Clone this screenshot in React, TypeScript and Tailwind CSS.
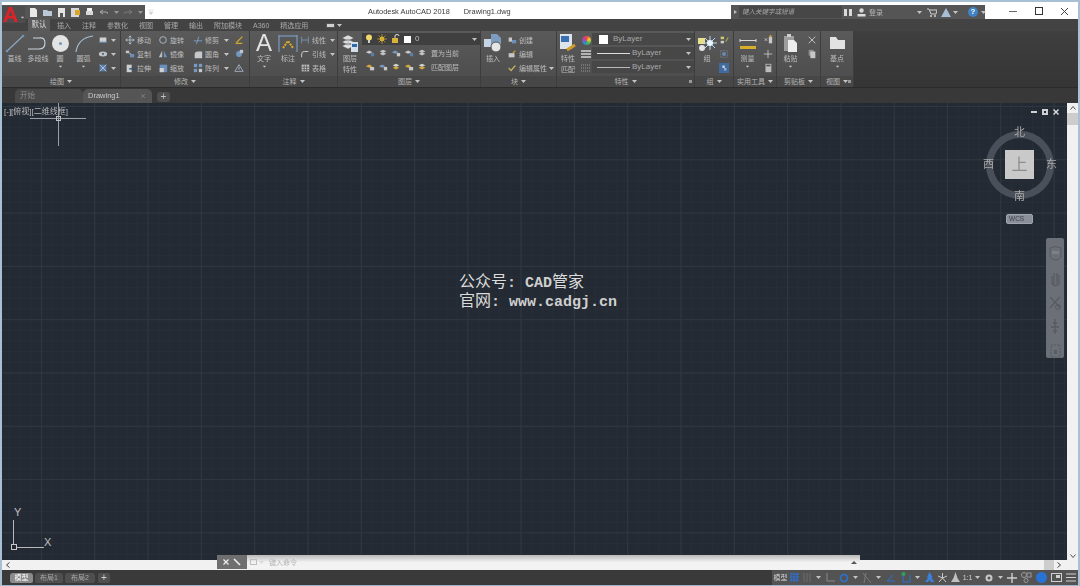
import React from 'react';

const Caret = ({ className = '' }: { className?: string }) => (
  <svg width="5" height="3" viewBox="0 0 5 3" className={`block shrink-0 ${className}`}>
    <polygon points="0,0 5,0 2.5,3" fill="#c4c4c4" />
  </svg>
);

const Ico = ({ w = 12, h = 12, children }: { w?: number; h?: number; children: React.ReactNode }) => (
  <svg width={w} height={h} viewBox={`0 0 ${w} ${h}`} fill="none" className="block shrink-0">
    {children}
  </svg>
);

/* ---------- small ribbon icons ---------- */
const icons: Record<string, React.ReactNode> = {
  rect: <><rect x="2" y="3" width="8" height="6" fill="#e8e8e8" /><rect x="2" y="8" width="8" height="1.5" fill="#5f8fc0" /></>,
  ellipse: <><ellipse cx="6" cy="6" rx="5" ry="3" fill="#d8d8d8" /><circle cx="6" cy="6" r="1.4" fill="#4f7fb5" /></>,
  hatch: <><rect x="2" y="2" width="8" height="8" fill="#5b86c4" /><path d="M2 2l8 8M10 2l-8 8" stroke="#d5dfea" /></>,
  move: <path d="M6 1v10M1 6h10M6 1L4.500 3M6 1l1.500 2M6 11L4.500 9M6 11l1.500-2M1 6l2-1.500M1 6l2 1.500M11 6L9 4.500M11 6L9 7.500" stroke="#c9d6e4" />,
  copy: <><rect x="1" y="2" width="4" height="3" fill="#dcdcdc" /><rect x="6" y="6" width="5" height="4" fill="#6e9bcf" /><path d="M5 5l2 1" stroke="#eee" /></>,
  stretch: <><rect x="2" y="2" width="6" height="9" fill="#e4e4e4" /><path d="M5 7h6" stroke="#1e4f86" strokeWidth="1.5" /></>,
  rotate: <circle cx="6" cy="6" r="4" stroke="#b7c3cf" strokeWidth="1.2" />,
  mirror: <><polygon points="1,10 5,10 5,2" fill="#d2d2d2" /><polygon points="7,2 7,10 11,10" fill="#6e9bcf" /></>,
  scale: <><rect x="2" y="2" width="9" height="9" fill="#6e9bcf" /><rect x="2" y="6" width="5" height="5" fill="#e6e6e6" /></>,
  trim: <path d="M1 7h10M7 2L4 11" stroke="#7fa6d4" strokeWidth="1.2" />,
  fillet: <path d="M2 11V7q0-4 4-4h5V11z" fill="#dcdcdc" />,
  array: <><rect x="1" y="1" width="4" height="4" fill="#7fa6d4" /><rect x="7" y="1" width="4" height="4" fill="#7fa6d4" /><rect x="1" y="7" width="4" height="4" fill="#7fa6d4" /><rect x="7" y="7" width="4" height="4" fill="#dcdcdc" /></>,
  erase: <path d="M2 10h8M3 9l7-7" stroke="#e2b52f" strokeWidth="1.5" />,
  explode: <><circle cx="6" cy="6" r="3.5" fill="#7aa5d4" /><rect x="7" y="1" width="4" height="4" fill="#cfd8e2" /></>,
  offset: <><polygon points="6,2 11,10 1,10" stroke="#bcd0e6" /><path d="M6 5v3" stroke="#e6e6e6" /></>,
  linear: <path d="M2 2v8M10 2v8M2 6h8" stroke="#7fa6d4" />,
  leader: <path d="M2 10V6q0-3 3-3h5" stroke="#dedede" strokeWidth="1.2" />,
  table: <><rect x="2" y="2" width="9" height="8" fill="#dcdcdc" /><path d="M2 5h9M2 8h9M5 2v8M8 2v8" stroke="#555" /></>,
  layerA: <><path d="M1 5l4-2 4 2-4 2z" fill="#dfdfdf" /><rect x="7" y="6" width="4" height="4" fill="#5e87b8" /></>,
  layerB: <><path d="M2 4l4-2 4 2-4 2zM2 7l4-2 4 2-4 2z" fill="#d8d8d8" /></>,
  layerC: <><path d="M1 5l4-2 4 2-4 2z" fill="#7fa6d4" /><rect x="7" y="6" width="4" height="4" fill="#dcdcdc" /></>,
  layerD: <><path d="M1 5l4-2 4 2-4 2z" fill="#e8b93a" /><rect x="6" y="6" width="5" height="4" fill="#dcdcdc" /></>,
  layerE: <><path d="M2 4l4-2 4 2-4 2z" fill="#e8e8e8" /><path d="M2 7l4-2 4 2-4 2z" fill="#e8b93a" /></>,
  create: <><rect x="2" y="3" width="4" height="5" fill="#dcdcdc" /><rect x="6" y="6" width="5" height="4" fill="#6e9bcf" /></>,
  edit: <><rect x="2" y="5" width="7" height="5" fill="#dcdcdc" /><path d="M7 5l3-3" stroke="#e3b02d" strokeWidth="1.5" /></>,
  attr: <path d="M2 6l3 3 5-6" stroke="#d7c36a" strokeWidth="1.5" />,
  groupA: <><rect x="2" y="2" width="4" height="3" fill="#e8dd7c" /><rect x="2" y="7" width="4" height="3" fill="#e0e0e0" /><path d="M8 8l3-5" stroke="#c9b642" strokeWidth="1.3" /></>,
  groupB: <><rect x="2" y="2" width="8" height="8" stroke="#7b8794" strokeDasharray="2 1" /><rect x="4" y="4" width="4" height="4" fill="#6e9bcf" /></>,
  groupC: <><rect x="0" y="0" width="12" height="12" fill="#3f6fb0" /><rect x="4" y="3" width="3" height="3" fill="#d9e6f4" /><rect x="6" y="6" width="3" height="3" fill="#9dc0e6" /></>,
  id: <><path d="M2 4l3 3M5 4L2 7" stroke="#e0e0e0" /><rect x="7" y="2" width="4" height="8" fill="#dcdcdc" /><rect x="8" y="0" width="2" height="3" fill="#e0b331" /></>,
  plus: <path d="M6 1v10M1 6h10" stroke="#dfdfdf" />,
  calc: <><rect x="3" y="1" width="7" height="10" fill="#cfcfcf" /><rect x="4" y="2" width="5" height="2" fill="#555" /></>,
  cut: <path d="M2 2l8 8M10 2l-8 8" stroke="#cfcfcf" strokeWidth="1.2" />,
  copyclip: <><rect x="2" y="1" width="6" height="7" fill="#9a9a9a" /><rect x="4" y="3" width="6" height="8" fill="#dcdcdc" /></>,
};

const Small = ({ name }: { name: string }) => (
  <svg width="10" height="10" viewBox="0 0 12 12" fill="none" className="block shrink-0 opacity-85">{icons[name]}</svg>
);

const Big = ({ label, label2, w, children, caret }: { label: string; label2?: string; w: number; children: React.ReactNode; caret?: boolean }) => (
  <div className="flex flex-col items-center shrink-0" style={{ width: w }}>
    <div className="h-[20px] flex items-center justify-center">{children}</div>
    <div className="h-[11px] leading-[11px] text-[7px] whitespace-nowrap">{label}</div>
    {label2 && <div className="h-[11px] leading-[11px] text-[7px] whitespace-nowrap">{label2}</div>}
    {caret && <Caret className="mt-[1px] scale-75" />}
  </div>
);

const Row = ({ name, label, caret, w }: { name: string; label?: string; caret?: boolean; w?: number }) => (
  <div className="h-[14px] flex items-center gap-[1px] whitespace-nowrap text-[7px] leading-none" style={w ? { width: w } : undefined}>
    <Small name={name} />
    {label && <span className="ml-[1px]">{label}</span>}
    {caret && <Caret className="ml-auto" />}
  </div>
);

const Panel = ({ title, w, children, corner }: { title: string; w: number; children: React.ReactNode; corner?: boolean }) => (
  <div className="flex flex-col shrink-0 border-r border-[#3d3d3d]" style={{ width: w }}>
    <div className="h-[45px] pt-[2px] flex bg-gradient-to-b from-[#5a5a5a] to-[#4e4e4e]">{children}</div>
    <div className="h-[11px] relative flex items-center justify-center gap-[3px] bg-[#474747] text-[7px] leading-none text-[#b5b5b5]">
      <span>{title}</span>
      <Caret />
      {corner && <span className="absolute right-[2px] top-[4px] w-[3px] h-[3px] bg-[#9a9a9a]" />}
    </div>
  </div>
);

const Combo = ({ children, w, dark }: { children: React.ReactNode; w: number; dark?: boolean }) => (
  <div className={`h-[12px] flex items-center pr-[3px] ${dark ? 'bg-[#3f3f3f]' : 'bg-[#474747]'}`} style={{ width: w }}>
    {children}
    <Caret className="ml-auto" />
  </div>
);

const tabs = ['插入', '注释', '参数化', '视图', '管理', '输出', '附加模块', 'A360', '精选应用'];

const TitleBar = () => (
  <div className="h-[17px] flex bg-white blur-[0.4px]">
    {/* quick access toolbar */}
    <div className="w-[143px] h-[14px] mt-[3px] bg-[#555555] flex items-center pl-[27px] gap-[5px]">
      <Ico w={9} h={9}><path d="M1 0h5l2 2v7H1z" fill="#e8e8e8" /></Ico>
      <Ico w={9} h={9}><path d="M0 2h4l1 1h4v5H0z" fill="#b9c7d6" /></Ico>
      <Ico w={9} h={9}><rect x="1" y="0" width="7" height="9" fill="#e4e4e4" /><rect x="3" y="5" width="3" height="4" fill="#555" /></Ico>
      <Ico w={9} h={9}><rect x="0" y="0" width="8" height="9" fill="#d8d8d8" /><rect x="4" y="2" width="5" height="5" fill="#d9a82b" /></Ico>
      <Ico w={9} h={9}><rect x="1" y="3" width="7" height="4" fill="#d8d8d8" /><rect x="2" y="0" width="5" height="3" fill="#f2f2f2" /></Ico>
      <Ico w={9} h={9}><path d="M1 4h6q2 0 2 2M1 4l3-2M1 4l3 2" stroke="#a9a9a9" /></Ico>
      <Caret className="ml-[1px] opacity-60" />
      <Ico w={9} h={9}><path d="M8 4H2q-2 0-2 2M8 4L5 2M8 4L5 6" stroke="#7b7b7b" /></Ico>
      <Caret className="opacity-60" />
      <Ico w={7} h={7}><path d="M0 1h6M1 3h4l-2 3z" stroke="#d5d5d5" fill="#d5d5d5" strokeWidth=".6" /></Ico>
    </div>
    <div className="ml-[223px] pt-[3px] text-[7.4px] leading-[14px] text-[#3a3a3a] flex gap-[14px] whitespace-nowrap">
      <span>Autodesk AutoCAD 2018</span>
      <span>Drawing1.dwg</span>
    </div>
    {/* search and sign in */}
    <div className="ml-auto w-[254px] h-[14px] mt-[3px] bg-[#555555] flex items-center text-[#b5b5b5] text-[7px] whitespace-nowrap">
      <span className="ml-[3px] w-0 h-0 border-y-[2px] border-l-[3px] border-y-transparent border-l-[#bbbbbb]" />
      <div className="ml-[2px] w-[103px] h-[12px] shrink-0 bg-[#474747] pl-[3px] flex items-center italic text-[6.5px] text-[#a8a8a8] leading-none">键入关键字或短语</div>
      <span className="ml-[1px]"><Ico w={10} h={9}><path d="M1 1h3v7H1zM6 1h3v7H6z" fill="#d8d8d8" /></Ico></span>
      <span className="ml-[4px]"><Ico w={9} h={9}><circle cx="4.500" cy="2.500" r="2.200" fill="#d8d8d8" /><rect x="0.500" y="6" width="8" height="2.500" fill="#dcdcdc" /></Ico></span>
      <span className="ml-[3px] leading-none">登录</span>
      <Caret className="ml-[34px]" />
      <span className="ml-[5px]"><Ico w={10} h={9}><path d="M0 1h2l2 5h5l1-4H3" stroke="#cfcfcf" /><circle cx="4" cy="8" r="1" fill="#cfcfcf" /><circle cx="8" cy="8" r="1" fill="#cfcfcf" /></Ico></span>
      <span className="ml-[4px]"><Ico w={10} h={9}><path d="M5 0l5 9H0z" fill="#a8bdd6" /></Ico></span>
      <Caret className="ml-[2px]" />
      <span className="ml-[10px]"><div className="w-[10px] h-[10px] rounded-full bg-[#3f83c4] text-white text-[8px] leading-[10px] text-center font-bold">?</div></span>
      <Caret className="ml-[3px]" />
    </div>
    <div className="w-[93px] flex items-center justify-between pl-[24px] pr-[9px] pt-[1px] text-[#555555]">
      <span className="w-[8px] h-px bg-[#666666]" />
      <span className="w-[8px] h-[8px] border border-[#333333]" />
      <Ico w={9} h={9}><path d="M1 1l7 7M8 1L1 8" stroke="#444" /></Ico>
    </div>
  </div>
);

const TabRow = () => (
  <div className="h-[12px] bg-[#434343] flex items-center pl-[26px] text-[7px] leading-none text-[#a9a9a9] whitespace-nowrap blur-[0.4px]">
    <div className="h-[12px] w-[22px] flex items-center justify-center bg-[#5a5a5a] text-[#dcdcdc] text-[7.5px]">默认</div>
    <div className="flex ml-[7px] gap-[11px]">
      {tabs.map(t => <span key={t}>{t}</span>)}
    </div>
    <span className="ml-[18px] w-[9px] h-[5px] bg-[#d0d0d0] border border-[#555]" />
    <Caret className="ml-[2px]" />
  </div>
);

const Ribbon = () => (
  <div className="h-[56px] flex bg-gradient-to-b from-[#3f3f3f] to-[#353535] text-[#bdbdbd] blur-[0.4px]">
    <Panel title="绘图" w={119}>
      <Big label="直线" w={25}>
        <Ico w={22} h={20}><path d="M3 18L19 3" stroke="#8fa7bf" strokeWidth="1.2" /><circle cx="3" cy="18" r="1.3" fill="#6e95bf" /><circle cx="19" cy="3" r="1.3" fill="#6e95bf" /></Ico>
      </Big>
      <Big label="多段线" w={22}>
        <Ico w={22} h={20}><path d="M1 16h11q6 0 6-6t-6-5H6" stroke="#c9d4df" strokeWidth="1.1" /></Ico>
      </Big>
      <Big label="圆" w={22} caret>
        <div className="w-[17px] h-[17px] rounded-full bg-[#e3e3e3] flex items-center justify-center"><span className="w-[3px] h-[3px] rounded-full bg-[#6e95bf]" /></div>
      </Big>
      <Big label="圆弧" w={25} caret>
        <Ico w={20} h={20}><path d="M2 19Q4 5 19 3" stroke="#a5bbd0" strokeWidth="1.2" /></Ico>
      </Big>
      <div className="flex flex-col ml-[2px]">
        <Row name="rect" caret w={18} />
        <Row name="ellipse" caret w={18} />
        <Row name="hatch" caret w={18} />
      </div>
    </Panel>
    <Panel title="修改" w={129}>
      <div className="flex flex-col ml-[4px] w-[33px]">
        <Row name="move" label="移动" />
        <Row name="copy" label="复制" />
        <Row name="stretch" label="拉伸" />
      </div>
      <div className="flex flex-col w-[35px]">
        <Row name="rotate" label="旋转" />
        <Row name="mirror" label="镜像" />
        <Row name="scale" label="缩放" />
      </div>
      <div className="flex flex-col w-[41px]">
        <Row name="trim" label="修剪" caret w={36} />
        <Row name="fillet" label="圆角" caret w={36} />
        <Row name="array" label="阵列" caret w={36} />
      </div>
      <div className="flex flex-col">
        <Row name="erase" />
        <Row name="explode" />
        <Row name="offset" />
      </div>
    </Panel>
    <Panel title="注释" w={88}>
      <Big label="文字" w={28} caret>
        <span className="text-[24px] leading-[20px] text-[#e2e2e2] [font-family:'Liberation_Sans',sans-serif]">A</span>
      </Big>
      <Big label="标注" w={20}>
        <Ico w={20} h={19}><path d="M1 1v17M19 1v17M1 2h18" stroke="#7fa6d4" /><path d="M5 14l5-7 5 7" stroke="#d8ab2e" strokeWidth="2" strokeDasharray="2 1" /></Ico>
      </Big>
      <div className="flex flex-col ml-[2px]">
        <Row name="linear" label="线性" caret w={35} />
        <Row name="leader" label="引线" caret w={35} />
        <Row name="table" label="表格" w={35} />
      </div>
    </Panel>
    <Panel title="图层" w={143}>
      <Big label="图层" label2="特性" w={24}>
        <Ico w={18} h={19}><path d="M1 4l6-3 6 3-6 3zM1 8l6-3 6 3-6 3zM1 12l6-3 6 3-6 3z" fill="#e0e0e0" stroke="#555" strokeWidth=".5" /><rect x="10" y="8" width="7" height="10" fill="#d5dfea" /><rect x="11" y="10" width="5" height="3" fill="#2f69ad" /></Ico>
      </Big>
      <div className="flex flex-col">
        <Combo w={118} dark>
          <div className="flex items-center gap-[4px] pl-[3px]">
            <Ico w={8} h={10}><circle cx="4" cy="3.500" r="3" fill="#f0d96a" /><rect x="3" y="6" width="2" height="3" fill="#cfcfcf" /></Ico>
            <Ico w={10} h={10}><circle cx="5" cy="5" r="2.400" fill="#e4bf3e" /><path d="M5 0v10M0 5h10M1.500 1.500l7 7M8.500 1.500l-7 7" stroke="#c9a52c" strokeWidth=".7" /></Ico>
            <Ico w={9} h={10}><rect x="1" y="4" width="6" height="5" fill="#d8b23a" /><path d="M4 4V2q0-1.500 2-1.500T8 2" stroke="#ddd" /></Ico>
            <span className="w-[7px] h-[7px] bg-white" />
            <span className="text-[8px] leading-none">0</span>
          </div>
        </Combo>
        <div className="h-[14px] mt-px flex items-center pl-px text-[7px] leading-none whitespace-nowrap">
          {['layerA', 'layerB', 'layerC', 'layerA', 'layerB'].map((n, i) => <span key={i} className="w-[13px] flex justify-center"><Small name={n} /></span>)}
          <span className="ml-[3px]">置为当前</span>
        </div>
        <div className="h-[14px] flex items-center pl-px text-[7px] leading-none whitespace-nowrap">
          {['layerD', 'layerC', 'layerE', 'layerD', 'layerE'].map((n, i) => <span key={i} className="w-[13px] flex justify-center"><Small name={n} /></span>)}
          <span className="ml-[3px]">匹配图层</span>
        </div>
      </div>
    </Panel>
    <Panel title="块" w={76}>
      <Big label="插入" w={24}>
        <Ico w={20} h={20}><rect x="1" y="6" width="14" height="8" fill="#c5d3e2" /><path d="M8 1h6l4 4v7H8z" fill="#7c9cc0" /><circle cx="13" cy="14" r="5" fill="#e5e5e5" stroke="#555" /></Ico>
      </Big>
      <div className="flex flex-col ml-[2px]">
        <Row name="create" label="创建" />
        <Row name="edit" label="编辑" />
        <Row name="attr" label="编辑属性" caret w={47} />
      </div>
    </Panel>
    <Panel title="特性" w={138} corner>
      <Big label="特性" label2="匹配" w={22}>
        <Ico w={18} h={20}><rect x="1" y="1" width="12" height="15" fill="#dde3ea" /><rect x="2" y="3" width="8" height="6" fill="#3a6fb3" /><path d="M8 17l8-5" stroke="#d39a2a" strokeWidth="3" /></Ico>
      </Big>
      <div className="flex flex-col ml-[1px] w-[12px] items-center">
        <div className="h-[14px] flex items-center"><div className="w-[9px] h-[9px] rounded-full bg-[conic-gradient(#e44,#ec3,#4b5,#38c,#a4b,#e44)]" /></div>
        <div className="h-[14px] flex items-center"><Ico w={10} h={9}><path d="M0 1h10M0 4h10M0 7h10" stroke="#d5d5d5" strokeWidth="1.3" /></Ico></div>
        <div className="h-[14px] flex items-center"><Ico w={10} h={9}><path d="M0 1h10M0 4h10M0 7h10" stroke="#9a9a9a" strokeDasharray="1 1" /></Ico></div>
      </div>
      <div className="flex flex-col gap-[2px] text-[8px] leading-none text-[#a9a9a9] [font-family:'Liberation_Sans',sans-serif]">
        <Combo w={102}><span className="ml-[7px] w-[9px] h-[9px] bg-white" /><span className="ml-[5px]">ByLayer</span></Combo>
        <Combo w={102}><span className="ml-[5px] w-[33px] h-px bg-[#dddddd]" /><span className="ml-[2px]">ByLayer</span></Combo>
        <Combo w={102}><span className="ml-[5px] w-[33px] h-px bg-[#b8b8b8]" /><span className="ml-[2px]">ByLayer</span></Combo>
      </div>
    </Panel>
    <Panel title="组" w={39}>
      <Big label="组" w={24}>
        <Ico w={20} h={19}><rect x="1" y="4" width="7" height="6" fill="#e8e08a" /><circle cx="5" cy="14" r="3" fill="#e4e4e4" /><path d="M13 2v14M6 9h14M8 4l10 10M18 4L8 14" stroke="#b7d8f5" /><circle cx="13" cy="9" r="3" fill="#eaf5ff" /></Ico>
      </Big>
      <div className="flex flex-col">
        <Row name="groupA" />
        <Row name="groupB" />
        <Row name="groupC" />
      </div>
    </Panel>
    <Panel title="实用工具" w={43}>
      <Big label="测量" w={27} caret>
        <Ico w={18} h={16}><path d="M1 4v3M17 4v3M1 5.500h16" stroke="#d8d8d8" /><rect x="1" y="11" width="16" height="3" fill="#d8ad2c" /></Ico>
      </Big>
      <div className="flex flex-col ml-[2px]">
        <Row name="id" />
        <Row name="plus" />
        <Row name="calc" />
      </div>
    </Panel>
    <Panel title="剪贴板" w={44}>
      <Big label="粘贴" w={27} caret>
        <Ico w={15} h={19}><rect x="1" y="2" width="10" height="15" fill="#9e9e9e" /><rect x="4" y="0" width="4" height="3" fill="#cfcfcf" /><path d="M5 6h6l3 3v9H5z" fill="#ececec" /></Ico>
      </Big>
      <div className="flex flex-col ml-[3px]">
        <Row name="cut" />
        <Row name="copyclip" />
      </div>
    </Panel>
    <Panel title="视图" w={33} corner>
      <Big label="基点" w={32} caret>
        <Ico w={15} h={12}><path d="M0 0h6l2 3h7v9H0z" fill="#e2e2e2" /></Ico>
      </Big>
    </Panel>
  </div>
);

const DocTabs = () => (
  <div className="h-[16px] border-t border-[#2b2b2b] bg-[#383838] flex items-end pl-[13px] text-[7.5px] leading-none whitespace-nowrap blur-[0.4px] [font-family:'Liberation_Sans','Noto_Sans_CJK_SC',sans-serif]">
    <div className="w-[68px] h-[14px] rounded-t-[5px] bg-[#4a4a4a] text-[#8c8c8c] flex items-center pl-[5px]">开始</div>
    <div className="w-[69px] h-[14px] rounded-t-[5px] bg-[#555555] text-[#c8c8c8] flex items-center pl-[5px] justify-between pr-[6px]">
      <span>Drawing1</span>
      <Ico w={6} h={6}><path d="M1 1l4 4M5 1L1 5" stroke="#777" /></Ico>
    </div>
    <div className="ml-[5px] mb-[1px] w-[13px] h-[10px] rounded-[3px] bg-[#4f4f4f] text-[#c0c0c0] text-[10px] leading-[10px] text-center">+</div>
  </div>
);

const ViewCube = () => (
  <div className="absolute left-[979px] top-[21px] w-[78px] h-[112px] text-[#a9a9a9] text-[11px] leading-none blur-[0.3px]">
    <div className="absolute left-[5px] top-[7px] w-[68px] h-[68px] rounded-full border-[7px] border-[#4a5059]" />
    <div className="absolute left-[24px] top-[26px] w-[29px] h-[29px] bg-[#c9c9c9] text-[#8d8d8d] text-[16px] flex items-center justify-center">上</div>
    <span className="absolute left-[33px] top-[3px]">北</span>
    <span className="absolute left-[33px] top-[67px]">南</span>
    <span className="absolute left-[2px] top-[35px]">西</span>
    <span className="absolute left-[65px] top-[35px]">东</span>
    <div className="absolute left-[25px] top-[90px] w-[27px] h-[10px] rounded-[2px] bg-[#8b8f9a] border border-[#a0a4ad] text-[#3c4048] text-[6.500px] leading-[8px] pl-[2px] [font-family:'Liberation_Sans',sans-serif]">WCS</div>
  </div>
);

const NavBar = () => (
  <div className="absolute left-[1044px] top-[135px] w-[18px] h-[120px] rounded-[2px] bg-[#6b6f77] flex flex-col items-center pt-[8px] gap-[7px] blur-[0.4px]">
    <Ico w={13} h={17}><path d="M1 2q5-3 11 0v9q-5 6-11 0z" stroke="#575b62" /><rect x="3" y="5" width="7" height="3" fill="#7c8088" /></Ico>
    <Ico w={13} h={17}><path d="M3 14V6M5 14V3M8 14V3M10 14V5M3 14q4 3 7 0" stroke="#575b62" strokeWidth="1.3" /></Ico>
    <Ico w={14} h={17}><path d="M2 3l5 5M12 3L7 8M7 8l-5 6M7 8l5 6" stroke="#575b62" strokeWidth="1.3" /><circle cx="10" cy="13" r="2.500" stroke="#575b62" /></Ico>
    <Ico w={14} h={17}><path d="M7 1v15M3 9h8M5 5h4M5 13h4" stroke="#575b62" strokeWidth="1.3" /></Ico>
    <Ico w={13} h={17}><rect x="2" y="3" width="9" height="12" stroke="#575b62" strokeDasharray="2 1" /><rect x="5" y="8" width="3" height="4" fill="#575b62" /></Ico>
  </div>
);

const Canvas = () => (
  <div className="relative flex-1 overflow-hidden bg-[#232a33] bg-[linear-gradient(#2f3741_1px,transparent_1px),linear-gradient(90deg,#2f3741_1px,transparent_1px),linear-gradient(#272e38_1px,transparent_1px),linear-gradient(90deg,#272e38_1px,transparent_1px)] bg-[size:53.3px_53.3px,53.3px_53.3px,10.66px_10.66px,10.66px_10.66px] bg-[position:0_3px,39px_0,0_3px,39px_0]">
    <div className="absolute left-[2px] top-[4px] text-[8px] leading-[10px] text-[#b9b9b9] whitespace-nowrap blur-[0.3px]">[-][俯视][二维线框]</div>
    {/* crosshair */}
    <div className="absolute left-[28px] top-[15px] w-[56px] h-px bg-[#9a9ea5]" />
    <div className="absolute left-[56px] top-0 w-px h-[43px] bg-[#9a9ea5]" />
    <div className="absolute left-[54px] top-[13px] w-[5px] h-[5px] border border-[#c0c0c0]" />
    {/* viewport controls */}
    <div className="absolute left-[1029px] top-[6px] flex items-center gap-[5px]">
      <span className="w-[6px] h-[2px] bg-[#d0d0d0]" />
      <span className="w-[6px] h-[6px] border-2 border-[#d0d0d0]" />
      <Ico w={6} h={6}><path d="M0.500 0.500l5 5M5.500 0.500l-5 5" stroke="#e0e0e0" strokeWidth="1.4" /></Ico>
    </div>
    <ViewCube />
    <NavBar />
    {/* watermark */}
    <div className="absolute left-[457px] top-[169px] text-[16px] leading-[19px] text-[#dcdcdc] whitespace-nowrap">
      <div className="h-[19px]">公众号<span className="text-[15px] font-bold text-[#cfcfcf] [font-family:'Liberation_Mono',monospace]">: CAD</span>管家</div>
      <div className="h-[19px]">官网<span className="text-[15px] font-bold text-[#cfcfcf] [font-family:'Liberation_Mono',monospace]">: www.cadgj.cn</span></div>
    </div>
    {/* ucs icon */}
    <div className="absolute left-[11px] top-[417px] w-[31px] h-[28px] border-l border-b border-[#b8b8b8]" />
    <div className="absolute left-[9px] top-[441px] w-[6px] h-[6px] border border-[#c8c8c8] bg-[#232a33]" />
    <span className="absolute left-[12px] top-[404px] text-[11px] leading-none text-[#c0c0c0] [font-family:'Liberation_Sans',sans-serif]">Y</span>
    <span className="absolute left-[42px] top-[434px] text-[11px] leading-none text-[#c0c0c0] [font-family:'Liberation_Sans',sans-serif]">X</span>
  </div>
);

const VScroll = () => (
  <div className="w-[11px] bg-[#f1f1f1] flex flex-col items-center">
    <div className="h-[10px] flex items-center"><Ico w={6} h={4}><path d="M0.500 3.500l2.500-3 2.500 3" stroke="#555" /></Ico></div>
    <div className="w-full h-[12px] bg-[#cdcdcd]" />
    <div className="mt-auto h-[8px] flex items-center"><Ico w={6} h={4}><path d="M0.500 0.500l2.500 3 2.500-3" stroke="#555" /></Ico></div>
  </div>
);

const HScroll = () => (
  <div className="h-[10px] relative bg-[#f1f1f1] flex items-center pl-[4px] pr-[17px]">
    <Ico w={4} h={6}><path d="M3.500 0.500l-3 2.500 3 2.500" stroke="#444" /></Ico>
    <div className="ml-auto w-[10px] h-[10px] bg-[#cdcdcd]" />
    <span className="ml-[3px]"><Ico w={4} h={6}><path d="M0.500 0.500l3 2.500-3 2.500" stroke="#444" /></Ico></span>
    {/* floating command line */}
    <div className="absolute left-[215px] bottom-[1px] w-[643px] h-[14px] flex text-[7px] leading-none blur-[0.3px]">
      <div className="w-[30px] bg-[#6f6f6f] flex items-center justify-center gap-[4px]">
        <Ico w={6} h={6}><path d="M0.500 0.500l5 5M5.500 0.500l-5 5" stroke="#eee" strokeWidth="1.2" /></Ico>
        <Ico w={8} h={8}><path d="M1 1l6 6" stroke="#eee" strokeWidth="1.6" /></Ico>
      </div>
      <div className="flex-1 bg-gradient-to-b from-[#b9b9b9] via-[#f1f1f1] to-[#f4f4f4] flex items-center pl-[3px] pr-[3px] text-[#b3b3b3]">
        <span className="w-[7px] h-[6px] border border-[#bdbdbd]" />
        <Caret className="ml-[2px] opacity-50" />
        <span className="ml-[5px]">键入命令</span>
        <span className="ml-auto w-0 h-0 border-x-[3px] border-b-[3px] border-x-transparent border-b-[#555555]" />
      </div>
    </div>
  </div>
);

const LayoutTab = ({ label, w, active }: { label: string; w: number; active?: boolean }) => (
  <div className={`h-[10px] rounded-t-[3px] rounded-b-[2px] flex items-center justify-center ${active ? 'bg-[#8c8c8c] text-white' : 'bg-[#4f4f4f] text-[#a8a8a8]'}`} style={{ width: w }}>{label}</div>
);

/* status bar slots: width plus what is drawn inside */
const slots: { w: number; node: React.ReactNode }[] = [
  { w: 17, node: <span className="text-[7px] text-[#d0d0d0] leading-none">模型</span> },
  { w: 11, node: <Ico w={9} h={9}><path d="M1 0v9M4 0v9M7 0v9M0 1h9M0 4h9M0 7h9" stroke="#2a73d6" /></Ico> },
  { w: 14, node: <Ico w={9} h={9}><path d="M1 0v9M4 0v9M7 0v9" stroke="#6f6f6f" /></Ico> },
  { w: 9, node: <Caret /> },
  { w: 14, node: <Ico w={9} h={9}><path d="M1 0v8h8" stroke="#8a8a8a" /></Ico> },
  { w: 14, node: <Ico w={10} h={10}><circle cx="5" cy="5" r="3.500" stroke="#2a73d6" strokeWidth="1.6" /></Ico> },
  { w: 9, node: <Caret /> },
  { w: 14, node: <Ico w={10} h={10}><path d="M1 0l8 10M4 0l-2 10" stroke="#7a7a7a" /></Ico> },
  { w: 9, node: <Caret /> },
  { w: 15, node: <Ico w={10} h={9}><path d="M1 8h8M1 8l6-6" stroke="#2a73d6" /></Ico> },
  { w: 15, node: <Ico w={10} h={11}><path d="M2 3v7h7V3" stroke="#2a73d6" /><circle cx="2.500" cy="2" r="2" fill="#2fa35a" /></Ico> },
  { w: 9, node: <Caret /> },
  { w: 14, node: <Ico w={11} h={11}><path d="M5.500 0l3 5-1 1 3 4H7L5.500 8 4 10H1l3-4-1-1z" fill="#3d80dc" /></Ico> },
  { w: 13, node: <Ico w={11} h={11}><path d="M5.500 1v5M1 4l4.500 2L10 4M2 10l3.500-4L9 10" stroke="#c8c8c8" /></Ico> },
  { w: 13, node: <Ico w={11} h={11}><path d="M5.500 0l2 6 2.500 4H1l2.500-4z" fill="#c0c0c0" /></Ico> },
  { w: 11, node: <span className="text-[7px] text-[#d0d0d0] leading-none">1:1</span> },
  { w: 9, node: <Caret /> },
  { w: 14, node: <Ico w={10} h={10}><circle cx="5" cy="5" r="3.500" fill="#c8c8c8" /><circle cx="5" cy="5" r="1.500" fill="#555" /></Ico> },
  { w: 9, node: <Caret /> },
  { w: 13, node: <Ico w={10} h={10}><path d="M5 0v10M0 5h10" stroke="#d0d0d0" strokeWidth="1.4" /></Ico> },
  { w: 16, node: <Ico w={11} h={11}><circle cx="3" cy="3" r="2.500" stroke="#999" /><rect x="6" y="1" width="4" height="4" stroke="#999" /><circle cx="5" cy="8.500" r="2" stroke="#999" /></Ico> },
  { w: 14, node: <div className="w-[11px] h-[11px] rounded-full bg-[#2a73d6]" /> },
  { w: 16, node: <Ico w={11} h={9}><rect x="0.500" y="0.500" width="10" height="8" stroke="#d0d0d0" /><rect x="5" y="2" width="4" height="3" fill="#d0d0d0" /></Ico> },
  { w: 14, node: <Ico w={10} h={9}><path d="M0 1h10M0 4.500h10M0 8h10" stroke="#d0d0d0" strokeWidth="1.200" /></Ico> },
];

const StatusBar = () => (
  <div className="h-[16px] bg-[#3a3a3a] border-b border-[#9db5c8] flex items-center pl-[8px] text-[7px] leading-none">
    <div className="flex items-center gap-[2px] blur-[0.4px]">
      <LayoutTab label="模型" w={23} active />
      <LayoutTab label="布局1" w={28} />
      <LayoutTab label="布局2" w={30} />
      <div className="ml-[1px] w-[12px] h-[10px] rounded-[2px] bg-[#4f4f4f] text-[#d0d0d0] text-[10px] leading-[10px] text-center">+</div>
    </div>
    <div className="ml-auto h-[15px] flex items-center bg-[#535353] blur-[0.4px]">
      {slots.map((s, i) => (
        <div key={i} className="flex items-center justify-center" style={{ width: s.w }}>{s.node}</div>
      ))}
    </div>
  </div>
);

const App: React.FC = () => {
  return (
    <div className="w-[1080px] h-[586px] flex flex-col overflow-hidden border-t-2 border-x-2 border-[#a8c0d4] bg-[#3c3c3c] [font-family:'Liberation_Sans','Noto_Sans_CJK_SC',sans-serif]">
      <div className="relative">
        <TitleBar />
        {/* app button with the product logo */}
        <div className="absolute z-10 left-0 top-[4px] w-[23px] h-[17px] bg-[#4d4d4d] flex items-center pl-px blur-[0.3px]">
          <Ico w={15} h={15}><path d="M0 15L6 0h3l6 15h-3.500l-1.200-3.500H4.700L3.500 15zM5.700 9h3.600L7.500 4z" fill="#d8232a" fillRule="evenodd" /></Ico>
          <Caret className="mt-[6px] ml-[2px] scale-75" />
        </div>
      </div>
      <TabRow />
      <Ribbon />
      <DocTabs />
      <div className="flex-1 min-h-0 flex">
        <Canvas />
        <VScroll />
      </div>
      <HScroll />
      <StatusBar />
    </div>
  );
};

export default App;
